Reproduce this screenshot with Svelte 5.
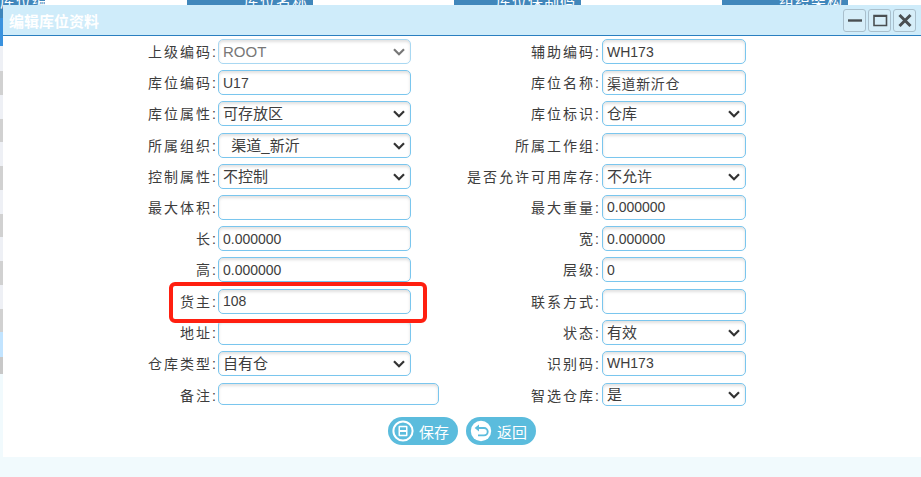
<script>
  const headCells = [
    { w: 45, text: '库位编码', blue: true, first: true },
    { w: 142, text: '', blue: false },
    { w: 126, text: '库位名称', blue: true },
    { w: 141, text: '', blue: false },
    { w: 127, text: '库位保制码', blue: true },
    { w: 141, text: '', blue: false },
    { w: 126, text: '组织架构', blue: true }
  ];
  const stripes = [
    ['a', 13], ['b', 28], ['c', 25], ['d', 24], ['c', 24], ['d', 23], ['c', 24], ['d', 24], ['c', 24], ['d', 23],
    ['c', 24], ['d', 24], ['c', 24], ['d', 23], ['e', 25], ['f', 17]
  ];
  const rows = [
    [
      { label: '上级编码', type: 'select', value: 'ROOT', disabled: true },
      { label: '辅助编码', type: 'input', value: 'WH173' }
    ],
    [
      { label: '库位编码', type: 'input', value: 'U17' },
      { label: '库位名称', type: 'input', value: '渠道新沂仓', cjk: true }
    ],
    [
      { label: '库位属性', type: 'select', value: '可存放区' },
      { label: '库位标识', type: 'select', value: '仓库' }
    ],
    [
      { label: '所属组织', type: 'select', value: '\u00a0\u00a0渠道_新沂' },
      { label: '所属工作组', type: 'input', value: '' }
    ],
    [
      { label: '控制属性', type: 'select', value: '不控制' },
      { label: '是否允许可用库存', type: 'select', value: '不允许' }
    ],
    [
      { label: '最大体积', type: 'input', value: '' },
      { label: '最大重量', type: 'input', value: '0.000000' }
    ],
    [
      { label: '长', type: 'input', value: '0.000000' },
      { label: '宽', type: 'input', value: '0.000000' }
    ],
    [
      { label: '高', type: 'input', value: '0.000000' },
      { label: '层级', type: 'input', value: '0' }
    ],
    [
      { label: '货主', type: 'input', value: '108' },
      { label: '联系方式', type: 'input', value: '' }
    ],
    [
      { label: '地址', type: 'input', value: '' },
      { label: '状态', type: 'select', value: '有效' }
    ],
    [
      { label: '仓库类型', type: 'select', value: '自有仓' },
      { label: '识别码', type: 'input', value: 'WH173' }
    ],
    [
      { label: '备注', type: 'input', value: '', memo: true },
      { label: '智选仓库', type: 'select', value: '是', short: true }
    ]
  ];
</script>

<div class="backdrop">
  <div class="head">
    {#each headCells as c}
      <div class="cell" class:blue={c.blue} class:first={c.first} style="width:{c.w}px">{c.text}</div>
    {/each}
  </div>
  <div class="strip">
    {#each stripes as s}
      <div class="st {s[0]}" style="height:{s[1]}px"></div>
    {/each}
  </div>
</div>

<div class="modal">
  <div class="titlebar">
    <span class="title">编辑库位资料</span>
    <div class="winbtns">
      <button class="wb" aria-label="最小化">
        <svg width="16" height="16" viewBox="0 0 16 16"><path d="M1 8.5h14" stroke="#4a4f52" stroke-width="2.4" /></svg>
      </button>
      <button class="wb" aria-label="最大化">
        <svg width="16" height="16" viewBox="0 0 16 16"><path d="M2 3.5h12.5v10H2z M2 3.5h12.5" fill="none" stroke="#4a4f52" stroke-width="1.6" /><path d="M2 4h12.5" stroke="#4a4f52" stroke-width="2" /></svg>
      </button>
      <button class="wb" aria-label="关闭">
        <svg width="16" height="16" viewBox="0 0 16 16"><path d="M2.5 3l11 11M13.5 3l-11 11" stroke="#4a4f52" stroke-width="3" /></svg>
      </button>
    </div>
  </div>
  <div class="body">
    <div class="form">
      {#each rows as row}
        {#each row as f, i}
          <div class="lab" class:r={i === 1} class:low={f.memo || f.short}>{f.label}<span class="colon">:</span></div>
          <div class="ctl" class:low={f.memo || f.short}>
            {#if f.type === 'select'}
              <div class="selwrap">
                <select class="fld" class:r={i === 1} class:short={f.short} disabled={f.disabled}>
                  <option>{f.value}</option>
                </select>
                <svg class="chev" class:dim={f.disabled} class:up={f.short} width="12" height="8" viewBox="0 0 12 8">
                  <path d="M1 1.2l5 5 5-5" fill="none" stroke="currentColor" stroke-width="2.2" />
                </svg>
              </div>
            {:else}
              <input class="fld" class:r={i === 1} class:memo={f.memo} class:cjk={f.cjk} type="text" value={f.value} />
            {/if}
          </div>
        {/each}
      {/each}
    </div>
    <div class="actions">
      <button class="act">
        <svg width="22" height="22" viewBox="0 0 22 22">
          <circle cx="11" cy="11" r="9.6" fill="none" stroke="#fff" stroke-width="2" />
          <rect x="6.5" y="5.8" width="9" height="10.4" rx="1" fill="#fff" />
          <rect x="8" y="7.3" width="6" height="2.7" fill="#5bbcdd" />
          <rect x="8" y="12" width="6" height="2.7" fill="#5bbcdd" />
        </svg>
        <span>保存</span>
      </button>
      <button class="act">
        <svg width="22" height="22" viewBox="0 0 22 22">
          <circle cx="11" cy="11" r="10.2" fill="#fff" />
          <path d="M8 8h6a3.6 3.6 0 0 1 0 7.4H8" fill="none" stroke="#5bbcdd" stroke-width="1.9" />
          <path d="M9 4.6L4.6 8 9 11.4z" fill="#5bbcdd" />
        </svg>
        <span>返回</span>
      </button>
    </div>
  </div>
</div>

<div class="mark"></div>

<style>
  :global(body) {
    margin: 0;
    background: #f1fafd;
    font-family: "Liberation Sans", "Noto Sans CJK SC", sans-serif;
    overflow: hidden;
  }
  .backdrop {
    height: 477px;
    overflow: hidden;
  }
  .head {
    display: flex;
    height: 5px;
    background: #fff;
    overflow: visible;
  }
  .cell {
    height: 5px;
    box-sizing: border-box;
    flex: none;
    line-height: 4px;
    font-size: 15px;
    letter-spacing: 1px;
    text-align: right;
    padding-right: 5px;
    color: #fff;
    white-space: nowrap;
  }
  .cell.first {
    padding-right: 0;
  }
  .cell.blue {
    background: #4187bb;
  }
  .strip {
    width: 3px;
  }
  .st.a { background: #3f86bb; }
  .st.b { background: #3a92de; }
  .st.c { background: #eef0f5; }
  .st.d { background: #d1d1d1; }
  .st.e { background: #c2e4ff; }
  .st.f { background: #c8c8c8; }

  .modal {
    position: absolute;
    left: 3px;
    right: 0;
    top: 5px;
    height: 452px;
    background: #fff;
  }
  .titlebar {
    height: 30px;
    box-sizing: content-box;
    background: #cfecfa;
    border-bottom: 1px solid #2a7fc0;
    display: flex;
    align-items: center;
    justify-content: space-between;
  }
  .title {
    margin-left: 6px;
    color: #fff;
    font-weight: 700;
    font-size: 15px;
  }
  .winbtns {
    display: flex;
    gap: 2px;
    margin-right: 5px;
  }
  .wb {
    width: 23px;
    height: 23px;
    padding: 0;
    display: flex;
    align-items: center;
    justify-content: center;
    background: #d6eef9;
    border: 1px solid #a9bfcc;
    border-radius: 3px;
  }
  .body {
    padding-top: 3px;
  }
  .form {
    display: grid;
    grid-template-columns: 215px 228px 156px 1fr;
    grid-auto-rows: 31.2px;
  }
  .lab {
    font-size: 14px;
    letter-spacing: 2px;
    color: #3d3d3d;
    text-align: right;
    padding-right: 2px;
    line-height: 26px;
    white-space: nowrap;
  }
  .lab.r {
    padding-right: 3px;
  }
  .colon {
    letter-spacing: 0;
  }
  .lab.low {
    padding-top: 1px;
  }
  .ctl {
    display: flex;
    align-items: flex-start;
  }
  .ctl.low {
    padding-top: 1px;
  }
  .selwrap {
    position: relative;
    display: flex;
  }
  .fld {
    box-sizing: border-box;
    width: 193px;
    height: 25px;
    margin: 0;
    background: #fff;
    border: 1px solid #7ac6ee;
    border-radius: 5px;
    box-shadow: inset 0 2px 3px rgba(0, 0, 0, 0.12);
    font-family: inherit;
    font-size: 14px;
    color: #3d3d3d;
    padding: 0 4px;
    outline: none;
  }
  .fld.cjk {
    letter-spacing: 0.6px;
  }
  select.fld {
    appearance: none;
    padding: 0 20px 0 4px;
    font-size: 15px;
  }
  select.fld:disabled {
    color: #777;
    opacity: 1;
    border-color: #a9d8f2;
  }
  .chev {
    position: absolute;
    right: 6px;
    top: 9px;
    color: #333;
    pointer-events: none;
  }
  .chev.dim {
    color: #777;
  }
  .chev.up {
    top: 8px;
  }
  .fld.r {
    width: 144px;
  }
  .fld.memo {
    width: 221px;
    height: 22px;
  }
  .fld.short {
    height: 23px;
  }
  .actions {
    display: flex;
    justify-content: center;
    gap: 8px;
    margin-top: 4px;
  }
  .act {
    width: 70px;
    height: 28px;
    padding: 0 0 0 4px;
    border: 0;
    border-radius: 14px;
    background: #5bbcdd;
    color: #fff;
    font-family: inherit;
    font-size: 15px;
    display: flex;
    align-items: center;
    gap: 5px;
  }
  .mark {
    position: absolute;
    left: 169px;
    top: 282px;
    width: 258px;
    height: 41px;
    box-sizing: border-box;
    border: 4px solid #ff1f10;
    border-radius: 6px;
  }
</style>
